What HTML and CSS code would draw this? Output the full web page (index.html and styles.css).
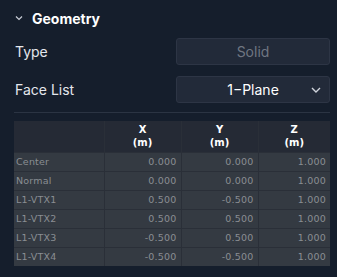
FILE: index.html
```html
<!DOCTYPE html>
<html>
<head>
<meta charset="utf-8">
<link rel="stylesheet" href="styles.css">
</head>
<body>
<div class="panel">
  <div class="section-head">
    <svg class="caret" width="8" height="6" viewBox="0 0 8 6"><path d="M1 1.5 L4 4.5 L7 1.5" fill="none" stroke="#c8cdd6" stroke-width="1.2"/></svg>
    <span class="title">Geometry</span>
  </div>
  <div class="fields">
    <div class="field">
      <span class="label">Type</span>
      <div class="box disabled">Solid</div>
    </div>
    <div class="field">
      <span class="label">Face List</span>
      <div class="box select">1−Plane
        <svg class="chev" width="10" height="6" viewBox="0 0 10 6"><path d="M1 1 L5 5 L9 1" fill="none" stroke="#d0d4dc" stroke-width="1.4"/></svg>
      </div>
    </div>
  </div>
  <div class="sep"></div>
  <table class="grid">
    <colgroup><col class="c0"><col class="c1"><col class="c2"><col class="c3"></colgroup>
    <thead>
      <tr><th></th><th>X<br>(m)</th><th>Y<br>(m)</th><th>Z<br>(m)</th></tr>
    </thead>
    <tbody>
      <tr><td>Center</td><td>0.000</td><td>0.000</td><td>1.000</td></tr>
      <tr><td>Normal</td><td>0.000</td><td>0.000</td><td>1.000</td></tr>
      <tr><td>L1-VTX1</td><td>0.500</td><td>-0.500</td><td>1.000</td></tr>
      <tr><td>L1-VTX2</td><td>0.500</td><td>0.500</td><td>1.000</td></tr>
      <tr><td>L1-VTX3</td><td>-0.500</td><td>0.500</td><td>1.000</td></tr>
      <tr><td>L1-VTX4</td><td>-0.500</td><td>-0.500</td><td>1.000</td></tr>
    </tbody>
  </table>
</div>
</body>
</html>
```
FILE: styles.css
```css
html, body {
  margin: 0;
  padding: 0;
  background: #151e2c;
}
.panel {
  width: 337px;
  height: 277px;
  box-sizing: border-box;
  padding: 0 7px 0 14px;
  font-family: Inter, "Noto Sans", sans-serif;
  color: #e6e9ee;
}
.section-head {
  height: 36px;
  display: flex;
  align-items: center;
}
.caret {
  margin-left: 1px;
  margin-right: 9px;
}
.title {
  font-size: 14px;
  font-weight: 700;
  color: #ffffff;
}
.fields {
  display: flex;
  flex-direction: column;
  gap: 11px;
  padding-top: 2px;
}
.field {
  display: flex;
  align-items: center;
  justify-content: space-between;
  height: 27px;
}
.label {
  font-size: 14px;
  color: #e4e7ec;
  padding-left: 1px;
}
.box {
  width: 154px;
  height: 27px;
  box-sizing: border-box;
  border: 1px solid #2d3545;
  border-radius: 3px;
  background: #222a39;
  font-size: 14px;
  display: flex;
  align-items: center;
  justify-content: center;
  position: relative;
}
.disabled {
  color: #6f7682;
}
.select {
  color: #ffffff;
}
.chev {
  position: absolute;
  right: 8px;
  top: 10px;
}
.sep {
  height: 1px;
  background: #2b3443;
  margin-top: 9px;
  margin-bottom: 8px;
}
.grid {
  border-collapse: collapse;
  table-layout: fixed;
  width: 316px;
  font-family: "DejaVu Sans", sans-serif;
  font-size: 9.5px;
  background: #2a2f38;
}
.c0 { width: 90px; }
.c1 { width: 77px; }
.c2 { width: 77px; }
.c3 { width: 72px; }
.grid th {
  background: #252a35;
  color: #ffffff;
  font-weight: bold;
  font-size: 10px;
  height: 31px;
  box-sizing: border-box;
  padding: 0;
  line-height: 13px;
  border: 1px solid #2a2f38;
  border-top: none;
}
.grid td {
  background: #343a42;
  color: #8a8e93;
  height: 19px;
  box-sizing: border-box;
  padding: 0 4px 0 3px;
  text-align: right;
  border: 1px solid #2a2f38;
  letter-spacing: 0.2px;
}
.grid td:first-child {
  text-align: left;
  padding-left: 2px;
}
.grid tr > :first-child { border-left: none; }
.grid tr > :last-child { border-right: none; }
.grid tbody tr:last-child td { border-bottom: none; }
```
